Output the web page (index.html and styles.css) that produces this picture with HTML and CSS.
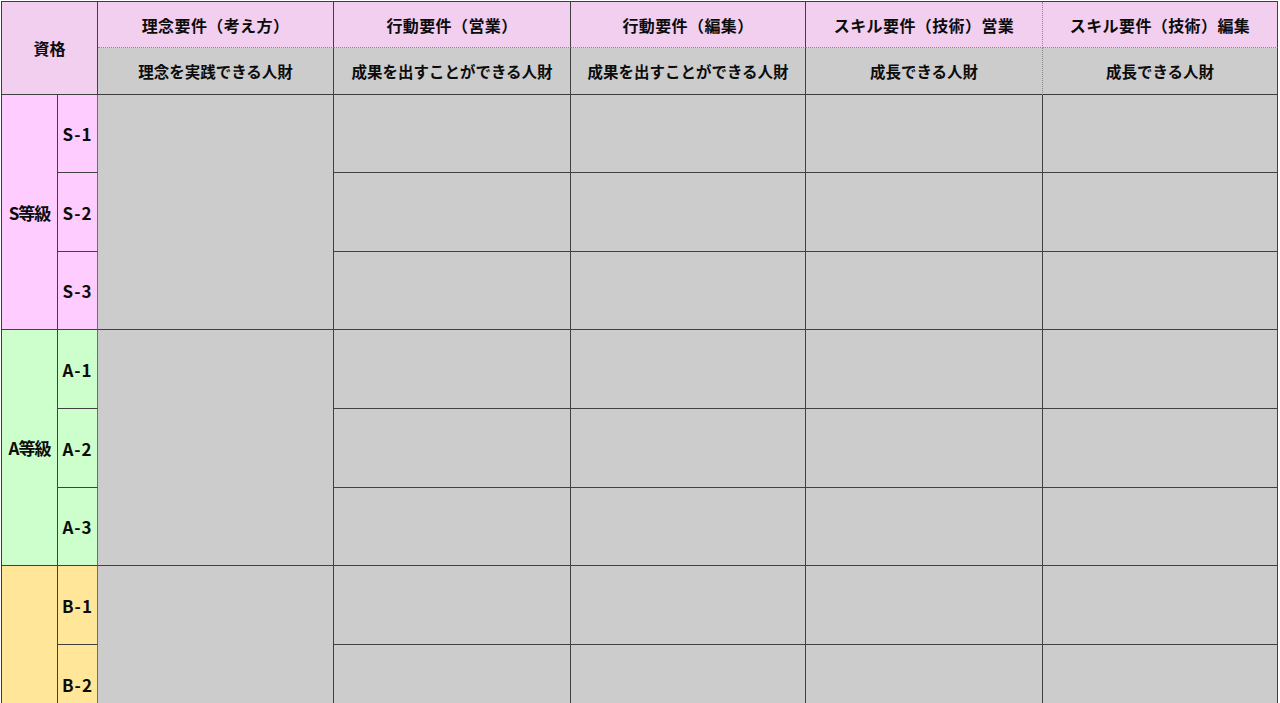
FILE: index.html
```html
<!DOCTYPE html>
<html lang="ja">
<head>
<meta charset="utf-8">
<title>等級要件表</title>
<link rel="stylesheet" href="styles.css">
</head>
<body>
<table class="sheet">
  <colgroup>
    <col class="c-grade">
    <col class="c-sub">
    <col class="c-a">
    <col class="c-b">
    <col class="c-c">
    <col class="c-d">
    <col class="c-e">
  </colgroup>
  <thead>
    <tr class="h1">
      <th class="qual" colspan="2" rowspan="2">資格</th>
      <th class="hp">理念要件（考え方）</th>
      <th class="hp">行動要件（営業）</th>
      <th class="hp">行動要件（編集）</th>
      <th class="hp dot-r">スキル要件（技術）営業</th>
      <th class="hp">スキル要件（技術）編集</th>
    </tr>
    <tr class="h2">
      <th class="hg">理念を実践できる人財</th>
      <th class="hg">成果を出すことができる人財</th>
      <th class="hg">成果を出すことができる人財</th>
      <th class="hg dot-r">成長できる人財</th>
      <th class="hg">成長できる人財</th>
    </tr>
  </thead>
  <tbody>
    <tr class="r78">
      <td class="grade s" rowspan="3">S等級</td>
      <td class="sub s">S-1</td>
      <td class="cell" rowspan="3"></td>
      <td class="cell"></td><td class="cell"></td><td class="cell"></td><td class="cell"></td>
    </tr>
    <tr class="r79">
      <td class="sub s">S-2</td>
      <td class="cell"></td><td class="cell"></td><td class="cell"></td><td class="cell"></td>
    </tr>
    <tr class="r78">
      <td class="sub s">S-3</td>
      <td class="cell"></td><td class="cell"></td><td class="cell"></td><td class="cell"></td>
    </tr>
    <tr class="r79">
      <td class="grade a" rowspan="3">A等級</td>
      <td class="sub a">A-1</td>
      <td class="cell" rowspan="3"></td>
      <td class="cell"></td><td class="cell"></td><td class="cell"></td><td class="cell"></td>
    </tr>
    <tr class="r79">
      <td class="sub a">A-2</td>
      <td class="cell"></td><td class="cell"></td><td class="cell"></td><td class="cell"></td>
    </tr>
    <tr class="r78">
      <td class="sub a">A-3</td>
      <td class="cell"></td><td class="cell"></td><td class="cell"></td><td class="cell"></td>
    </tr>
    <tr class="r79">
      <td class="grade b" rowspan="2"></td>
      <td class="sub b">B-1</td>
      <td class="cell" rowspan="2"></td>
      <td class="cell"></td><td class="cell"></td><td class="cell"></td><td class="cell"></td>
    </tr>
    <tr class="r79">
      <td class="sub b">B-2</td>
      <td class="cell"></td><td class="cell"></td><td class="cell"></td><td class="cell"></td>
    </tr>
  </tbody>
</table>
</body>
</html>
```

FILE: styles.css
```css
html, body {
  margin: 0;
  padding: 0;
  background: #ffffff;
  height: 703px;
  overflow: hidden;
}

body {
  font-family: "Noto Sans CJK JP", "Noto Sans", sans-serif;
  color: #0c0c0c;
}

.sheet {
  margin: 1px 0 0 1px;
  border-collapse: separate;
  border-spacing: 0;
  table-layout: fixed;
  width: 1277px;
  border-top: 1px solid #3c3c3c;
  border-left: 1px solid #3c3c3c;
}

.c-grade { width: 56px; }
.c-sub { width: 40px; }
.c-a { width: 236px; }
.c-b { width: 237px; }
.c-c { width: 235px; }
.c-d { width: 237px; }
.c-e { width: 235px; }

.sheet th,
.sheet td {
  box-sizing: border-box;
  padding: 0;
  border-right: 1px solid #404040;
  border-bottom: 1px solid #404040;
  text-align: center;
  vertical-align: middle;
  font-weight: 700;
  white-space: nowrap;
  overflow: hidden;
}

.h1 { height: 46px; }
.h2 { height: 47px; }
.r78 { height: 78px; }
.r79 { height: 79px; }

.qual {
  background: #f2ceef;
  font-size: 16px;
  padding-right: 4px;
}

.hp {
  background: #f2ceef;
  font-size: 16px;
  letter-spacing: 0.4px;
}

.sheet .h1 .hp {
  border-bottom: 1px dotted #8a8a8a;
}

.hg {
  background: #cccccc;
  font-size: 15.5px;
}

.sheet .dot-r {
  border-right: 1px dotted #8a8a8a;
}

.sheet .h2 th {
  border-bottom: 1px solid #3c3c3c;
}

.grade {
  font-size: 17px;
  letter-spacing: -1px;
  padding-left: 2px;
}

.sub {
  font-size: 17px;
  letter-spacing: 1px;
  padding-left: 2px;
}

.sheet .sub {
  border-right: 1px solid #6e6e6e;
}

.s { background: #ffccff; }
.a { background: #ccffcc; }
.b { background: #ffe699; }

.cell {
  background: #cccccc;
}
```
